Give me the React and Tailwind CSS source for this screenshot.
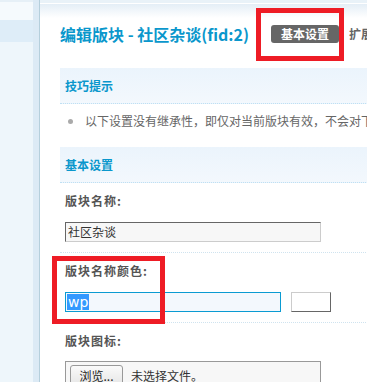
const font = { fontFamily: '"Noto Sans CJK SC", "Liberation Sans", sans-serif' }

function SectionHead({ title }) {
  return (
    <div className="h-[36px] flex items-center pl-[5px] bg-[linear-gradient(to_bottom,#ebf4fc,#f3f8fd)] border-b border-dotted border-[#bfe0f3]">
      <span className="text-[12px] font-bold text-[#0a97cc] leading-none">{title}</span>
    </div>
  )
}

function Row({ label, children }) {
  return (
    <div className="pt-[10px] pb-[10px] pl-[5px] border-b border-dotted border-[#cfe3ef]">
      <div className="h-[16px] flex items-center text-[12px] font-bold text-[#555] tracking-[1px]">{label}</div>
      <div className="mt-[13px] flex items-center">{children}</div>
    </div>
  )
}

export default function App() {
  return (
    <div className="w-[367px] h-[382px] overflow-hidden flex bg-white" style={font}>
      {/* sidebar */}
      <div className="w-[40px] shrink-0 flex border-r border-[#b5cfdc]">
        <div className="w-[33px] flex flex-col bg-[#eef6fb]">
          <div className="h-[2px] bg-[#e6f0f7]" />
          <div className="h-[18px] bg-[#f5fafd]" />
          <div className="h-[22px] bg-[#deedf8]" />
        </div>
        <div className="w-[6px] bg-[#dceaf5]" />
      </div>

      {/* main */}
      <div className="relative flex-1 min-w-0">
        <div className="h-[4px] bg-[#e9f2f8] border-b border-white" />
        <div className="h-[64px] bg-[linear-gradient(to_bottom,#e4eef6_0px,#ffffff_14px)] pl-[20px] pt-[10px]">
          <div className="h-[40px] flex items-center whitespace-nowrap">
            <span className="text-[16px] font-bold text-[#0a97cc]">编辑版块 - 社区杂谈(fid:2)</span>
            <span className="ml-[22px] h-[18px] px-[10px] rounded-[3px] bg-[#666] text-white text-[12px] font-bold flex items-center">基本设置</span>
            <span className="ml-[10px] text-[12px] font-bold text-[#666]">扩展设置</span>
          </div>
        </div>

        <div className="pl-[20px] w-[360px]">
          <SectionHead title="技巧提示" />
          <div className="pt-[9px] pb-[18px] flex items-center h-[43px] whitespace-nowrap">
            <span className="shrink-0 ml-[8px] w-[5px] h-[5px] rounded-full bg-[#aaa]" />
            <span className="ml-[12px] text-[12px] text-[#666] leading-[16px]">以下设置没有继承性，即仅对当前版块有效，不会对下级版块产生影响。</span>
          </div>

          <SectionHead title="基本设置" />

          <Row label="版块名称:">
            <div className="w-[256px] h-[20px] bg-[#f7f7f7] border border-t-[#666] border-l-[#666] border-r-[#ccc] border-b-[#ccc] flex items-center pl-[2px] text-[12px] text-[#333]">
              社区杂谈
            </div>
          </Row>

          <Row label="版块名称颜色:">
            <div className="w-[216px] h-[20px] bg-[#f3f8fd] border border-[#0a9bd2] flex items-center pl-[1px]">
              <span className="bg-[#3399ff] text-white text-[14px] leading-[16px] px-[1px]" style={{ fontFamily: '"DejaVu Sans", sans-serif' }}>wp</span>
            </div>
            <div className="ml-[10px] w-[40px] h-[20px] bg-white border border-t-[#ccc] border-l-[#ccc] border-r-[#666] border-b-[#666]" />
          </Row>

          <div className="pt-[10px] pl-[5px]">
            <div className="h-[16px] flex items-center text-[12px] font-bold text-[#555] tracking-[1px]">版块图标:</div>
            <div className="mt-[12px] w-[256px] h-[30px] bg-[#f7f7f7] border border-[#999] pl-[4px] pt-[3px] flex items-start">
              <span className="w-[53px] h-[22px] border border-[#999] rounded-t-[3px] bg-[linear-gradient(to_bottom,#fafafa,#e5e5e5)] text-[12px] text-[#222] flex items-center justify-center">浏览...</span>
              <span className="ml-[8px] text-[12px] text-[#333] leading-[22px]">未选择文件。</span>
            </div>
          </div>
        </div>

        {/* annotation boxes */}
        <div className="absolute left-[216px] top-[8px] w-[88px] h-[53px] border-[5px] border-[#ee1c25]" />
        <div className="absolute left-[12px] top-[256px] w-[113px] h-[68px] border-[5px] border-[#ee1c25]" />
      </div>
    </div>
  )
}
